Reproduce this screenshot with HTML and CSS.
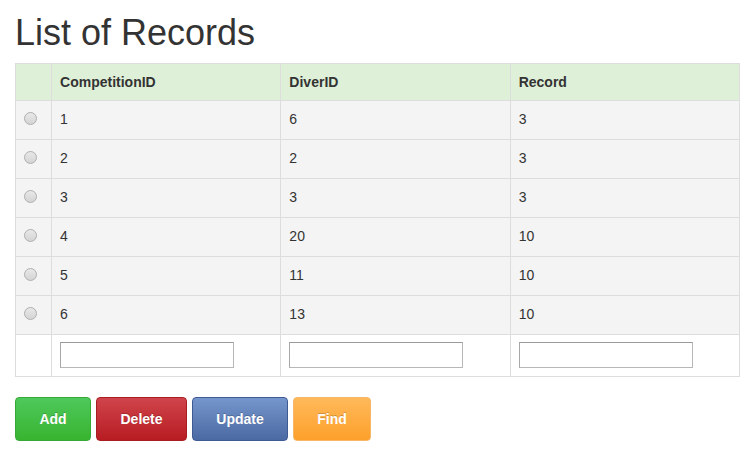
FILE: index.html
```html
<!DOCTYPE html>
<html>
<head>
<meta charset="utf-8">
<title>List of Records</title>
<link rel="stylesheet" href="styles.css">
</head>
<body>
<div class="container">
  <h1 class="title">List of Records</h1>
  <table class="records">
    <colgroup>
      <col class="c-sel"><col class="c-data"><col class="c-data"><col class="c-data">
    </colgroup>
    <thead>
      <tr class="head"><th></th><th>CompetitionID</th><th>DiverID</th><th>Record</th></tr>
    </thead>
    <tbody>
      <tr class="row"><td><input type="radio" name="sel" class="radio"></td><td>1</td><td>6</td><td>3</td></tr>
      <tr class="row"><td><input type="radio" name="sel" class="radio"></td><td>2</td><td>2</td><td>3</td></tr>
      <tr class="row"><td><input type="radio" name="sel" class="radio"></td><td>3</td><td>3</td><td>3</td></tr>
      <tr class="row"><td><input type="radio" name="sel" class="radio"></td><td>4</td><td>20</td><td>10</td></tr>
      <tr class="row"><td><input type="radio" name="sel" class="radio"></td><td>5</td><td>11</td><td>10</td></tr>
      <tr class="row"><td><input type="radio" name="sel" class="radio"></td><td>6</td><td>13</td><td>10</td></tr>
      <tr class="inputs"><td></td><td><input type="text" class="field"></td><td><input type="text" class="field"></td><td><input type="text" class="field"></td></tr>
    </tbody>
  </table>
  <div class="actions">
    <button class="btn btn-add">Add</button>
    <button class="btn btn-delete">Delete</button>
    <button class="btn btn-update">Update</button>
    <button class="btn btn-find">Find</button>
  </div>
</div>
</body>
</html>
```
FILE: styles.css
```css
html, body {
  margin: 0;
  padding: 0;
  background: #fff;
}
body {
  font-family: "Liberation Sans", Arial, Helvetica, sans-serif;
  font-size: 14px;
  line-height: 20px;
  color: #333;
}
.container {
  padding: 0 15px;
}
.title {
  margin: 13px 0 10px;
  font-size: 36px;
  font-weight: 500;
  line-height: 39.6px;
  color: #333;
}
.records {
  width: 725px;
  border-collapse: collapse;
  border: 1px solid #ddd;
}
.c-sel { width: 36px; }
.c-data { width: 229px; }
.records th,
.records td {
  border: 1px solid #ddd;
  text-align: left;
  vertical-align: top;
  padding: 8px;
  line-height: 20px;
}
.records th {
  font-weight: bold;
}
.head th {
  background: #dff0d8;
}
.row td {
  background: #f4f4f4;
  padding: 8px 8px 10px;
}
.inputs td {
  background: #fff;
  padding: 7px 8px 8px;
}
.radio {
  -webkit-appearance: none;
  appearance: none;
  display: block;
  width: 13px;
  height: 13px;
  margin: 3px 0 0 0;
  border: 1px solid #b0b0b0;
  border-radius: 50%;
  background: linear-gradient(#e8e8e8, #d4d4d4);
  box-sizing: border-box;
}
.field {
  display: block;
  box-sizing: border-box;
  width: 174px;
  height: 26px;
  margin: 0;
  padding: 2px 4px;
  border: 1px solid #b7b7b7;
  border-top-color: #9a9a9a;
  border-left-color: #a8a8a8;
  background: #fff;
  font: inherit;
}
.actions {
  display: flex;
  gap: 5px;
  margin-top: 20px;
}
.btn {
  height: 44px;
  padding: 0 23px;
  border: 1px solid;
  border-radius: 4px;
  font-family: "Liberation Sans", Arial, Helvetica, sans-serif;
  font-size: 14px;
  font-weight: bold;
  color: #fff;
  text-shadow: 0 -1px 0 rgba(0,0,0,0.2);
  cursor: pointer;
}
.btn-add {
  width: 76px;
  background: linear-gradient(#4ec95c, #39b42f);
  border-color: #37a836;
}
.btn-delete {
  width: 91px;
  background: linear-gradient(#d0444b, #b71c22);
  border-color: #a81d22;
}
.btn-update {
  width: 96px;
  background: linear-gradient(#7596cd, #4b69a2);
  border-color: #3f5b93;
}
.btn-find {
  width: 78px;
  background: linear-gradient(#ffb95a, #fda02b);
  border-color: #f8b766;
}
```
